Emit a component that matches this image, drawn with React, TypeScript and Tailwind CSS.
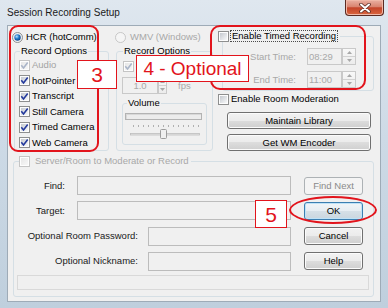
import React, { useId } from 'react';

const RED = '#e2141c';

function useSafeId() {
  return 'g' + useId().replace(/[^a-zA-Z0-9]/g, '');
}

function CheckBox({ checked = false, disabled = false }: { checked?: boolean; disabled?: boolean }) {
  const id = useSafeId();
  return (
    <svg width="11" height="11" viewBox="0 0 11 11" className="shrink-0">
      <defs>
        <linearGradient id={id} x1="0" y1="0" x2="1" y2="1">
          <stop offset="0" stopColor={disabled ? '#e6e6e6' : '#c5c9cf'} />
          <stop offset="1" stopColor={disabled ? '#f7f7f7' : '#f8f9fa'} />
        </linearGradient>
      </defs>
      <rect x="0.5" y="0.5" width="10" height="10" fill="#fdfdfd" stroke={disabled ? '#c4c4c4' : '#8e8f8f'} />
      <rect x="2" y="2" width="7" height="7" fill={`url(#${id})`} />
      {checked && (
        <path d="M2.3 5.3 4.5 7.9 8.7 2.4" fill="none" stroke={disabled ? '#a9b4c8' : '#23399c'} strokeWidth="1.6" />
      )}
    </svg>
  );
}

function Radio({ selected = false, disabled = false }: { selected?: boolean; disabled?: boolean }) {
  const id = useSafeId();
  return (
    <svg width="11" height="11" viewBox="0 0 11 11" className="shrink-0">
      <defs>
        <radialGradient id={id} cx="0.38" cy="0.35" r="0.7">
          <stop offset="0" stopColor="#b9e3ff" />
          <stop offset="0.5" stopColor="#1f7bc9" />
          <stop offset="1" stopColor="#0c3f7f" />
        </radialGradient>
      </defs>
      <circle cx="5.5" cy="5.5" r="5" fill={disabled ? '#f3f3f3' : '#e4e7eb'} stroke={disabled ? '#c6c6c6' : '#8e8f8f'} />
      <circle cx="5.5" cy="5.5" r="3.9" fill={disabled ? '#f5f5f5' : '#f7f7f7'} />
      {selected && <circle cx="5.5" cy="5.5" r="3.2" fill={`url(#${id})`} />}
    </svg>
  );
}

function Arrow({ up = false }: { up?: boolean }) {
  return (
    <svg width="5" height="3" viewBox="0 0 5 3">
      <path d={up ? 'M0 3 2.5 0 5 3Z' : 'M0 0 2.5 3 5 0Z'} fill="#a8a8a8" />
    </svg>
  );
}

function Spinner({ w = 14, h = 17 }: { w?: number; h?: number }) {
  return (
    <div
      className="flex flex-col border border-[#c9c9c9] bg-[linear-gradient(#f8f8f8,#ececec)]"
      style={{ width: w, height: h }}
    >
      <div className="flex flex-1 items-center justify-center border-b border-[#d2d2d2]">
        <Arrow up />
      </div>
      <div className="flex flex-1 items-center justify-center">
        <Arrow />
      </div>
    </div>
  );
}

function Btn({
  children,
  className = '',
  disabled = false,
  primary = false,
}: {
  children: React.ReactNode;
  className?: string;
  disabled?: boolean;
  primary?: boolean;
}) {
  const look = disabled
    ? 'border-[#adb2b5] bg-[#f4f4f4] text-[#8a8a8a]'
    : primary
      ? 'border-[#3c7fb1] bg-[linear-gradient(#f1f5f8,#e6edf2_50%,#d6e0e7_50%,#cad6df)] shadow-[inset_0_0_0_1px_#bfe2f7]'
      : 'border-[#707070] bg-[linear-gradient(#f2f2f2,#ebebeb_50%,#dddddd_50%,#cfcfcf)] shadow-[inset_0_0_0_1px_#fbfbfb]';
  return (
    <div className={`flex shrink-0 items-center justify-center rounded-[3px] border ${look} ${className}`}>
      {children}
    </div>
  );
}

function CloseButton() {
  return (
    <div className="mr-[4px] flex h-[16px] w-[39px] items-center justify-center rounded-b-[4px] border border-t-0 border-[#5b2a22] bg-[linear-gradient(#eab0a2,#d98470_45%,#c4442a_52%,#d9663f)] shadow-[inset_0_0_0_1px_#f0b8a8]">
      <svg width="12" height="10" viewBox="0 0 12 10">
        <path d="M2 1.5 10 8.5M10 1.5 2 8.5" stroke="#5a2d26" strokeWidth="3.6" strokeLinecap="round" />
        <path d="M2 1.5 10 8.5M10 1.5 2 8.5" stroke="#ffffff" strokeWidth="2" strokeLinecap="round" />
      </svg>
    </div>
  );
}

const Field = ({ className = '' }: { className?: string }) => (
  <div className={`shrink-0 border border-[#bcbcbc] bg-[#f0f0f0] ${className}`} />
);

const ROWS: { label: string; checked: boolean; disabled?: boolean }[] = [
  { label: 'Audio', checked: true, disabled: true },
  { label: 'hotPointer', checked: true },
  { label: 'Transcript', checked: true },
  { label: 'Still Camera', checked: true },
  { label: 'Timed Camera', checked: true },
  { label: 'Web Camera', checked: true },
];

const FORM: { label: string; labelW: string; inputCls: string; btn: string; disabled?: boolean; primary?: boolean }[] = [
  { label: 'Find:', labelW: 'w-[48px]', inputCls: 'ml-[12px] w-[214px]', btn: 'Find Next', disabled: true },
  { label: 'Target:', labelW: 'w-[48px]', inputCls: 'ml-[12px] w-[214px]', btn: 'OK', primary: true },
  { label: 'Optional Room Password:', labelW: 'w-[121px]', inputCls: 'ml-[10px] w-[143px]', btn: 'Cancel' },
  { label: 'Optional Nickname:', labelW: 'w-[121px]', inputCls: 'ml-[10px] w-[143px]', btn: 'Help' },
];

export default function App() {
  return (
    <div className="relative h-[308px] w-[388px] overflow-hidden bg-[linear-gradient(180deg,#dfe7ef_0%,#cddae6_45%,#bfcfdd_100%)] font-['Liberation_Sans',Arial,sans-serif] text-[9.5px] leading-[12px] text-black">
      {/* Title bar */}
      <div className="flex h-[25px] items-start justify-between">
        <div className="pl-[7px] pt-[6px] text-[10px] leading-[13px] text-[#1a1a1a]">Session Recording Setup</div>
        <CloseButton />
      </div>

      {/* Client area */}
      <div className="ml-[7px] h-[277px] w-[374px] border border-[#9eabb7] bg-[#f0f0f0]">
        <div className="flex h-[125px]">
          {/* HCR column */}
          <div className="flex w-[101px] shrink-0 flex-col pl-[4px]">
            <div className="mt-[5px] flex h-[12px] items-center gap-[3px]">
              <Radio selected />
              <span>HCR (hotComm)</span>
            </div>
            <fieldset className="ml-[2px] mt-[2px] h-[106px] w-[95px] rounded-[3px] border border-[#d5dfe5] pl-[4px]">
              <legend className="ml-[1px] px-[1px]">Record Options</legend>
              <div className="pt-[0.5px]">
                {ROWS.map((r) => (
                  <div key={r.label} className="flex h-[15.5px] items-center gap-[2px]">
                    <CheckBox checked={r.checked} disabled={r.disabled} />
                    <span className={r.disabled ? 'text-[#a3a3a3]' : ''}>{r.label}</span>
                  </div>
                ))}
              </div>
            </fieldset>
          </div>

          {/* WMV column */}
          <div className="ml-[6px] flex w-[98px] shrink-0 flex-col">
            <div className="mt-[5px] flex h-[12px] items-center gap-[4px]">
              <Radio disabled />
              <span className="text-[#a8a8a8]">WMV (Windows)</span>
            </div>
            <fieldset className="ml-[1px] mt-[2px] h-[106px] w-[97px] rounded-[3px] border border-[#d5dfe5] pl-[6px]">
              <legend className="px-[1px]">Record Options</legend>
              <div className="mt-[4px]">
                <CheckBox checked disabled />
              </div>
              <div className="ml-[-1px] mt-[5px] flex items-center">
                <div className="flex h-[17px] w-[36px] items-center justify-center border border-[#c9c9c9] bg-[#f0f0f0] text-[#a8a8a8]">
                  1.0
                </div>
                <Spinner w={9} h={17} />
                <span className="ml-[11px] text-[#a8a8a8]">fps</span>
              </div>
              <fieldset className="ml-[-1px] mt-[3px] h-[48px] w-[85px] rounded-[3px] border border-[#d5dfe5] pl-[2px]">
                <legend className="ml-[2px] px-[1px]">Volume</legend>
                <div className="mt-[4px] h-[7px] w-[77px] border border-[#b3b3b3] bg-[#ececec] shadow-[inset_1px_1px_0_#d8d8d8]" />
                <svg width="77" height="2" viewBox="0 0 77 2" className="mt-[5px] block">
                  {Array.from({ length: 14 }).map((_, i) => (
                    <rect key={i} x={8 + i * 5} y="0" width="1" height="2" fill="#b0b0b0" />
                  ))}
                </svg>
                <svg width="77" height="10" viewBox="0 0 77 10" className="mt-[2px] block">
                  <rect x="5.5" y="4.5" width="69" height="1.5" fill="#e6e6e6" stroke="#bdbdbd" strokeWidth="0.8" />
                  <rect x="35.5" y="0.5" width="6" height="9" rx="1" fill="#efefef" stroke="#9c9c9c" />
                </svg>
              </fieldset>
            </fieldset>
          </div>

          {/* Right column */}
          <div className="ml-[4px] flex w-[157px] shrink-0 flex-col">
            <fieldset className="ml-[5px] mt-[4px] h-[61px] w-[152px] rounded-[3px] border border-[#d5dfe5] pl-0">
              <legend className="ml-[-5px] flex items-center gap-[1px] pr-[2px]">
                <CheckBox />
                <span className="border border-dotted border-[#4a4a4a] px-[1px] leading-[10px]">Enable Timed Recording</span>
              </legend>
              <div className="mt-[6px] flex flex-col gap-[6px]">
                {[
                  ['Start Time:', '08:29'],
                  ['End Time:', '11:00'],
                ].map(([l, v]) => (
                  <div key={l} className="flex h-[17px] items-center">
                    <span className="w-[73px] text-right text-[#a8a8a8]">{l}</span>
                    <div className="ml-[11px] flex h-[17px] w-[35px] items-center border border-[#c9c9c9] bg-[#f0f0f0] pl-[1px] text-[#a8a8a8]">
                      {v}
                    </div>
                    <Spinner />
                  </div>
                ))}
              </div>
            </fieldset>
            <div className="ml-[1px] mt-[2px] flex h-[12px] items-center gap-[2px]">
              <CheckBox />
              <span>Enable Room Moderation</span>
            </div>
            <Btn className="ml-[10px] mt-[7px] h-[17px] w-[144px]">Maintain Library</Btn>
            <Btn className="ml-[10px] mt-[5px] h-[17px] w-[144px]">Get WM Encoder</Btn>
          </div>
        </div>

        {/* Server / room group */}
        <fieldset className="ml-[5px] mt-[4px] h-[142px] w-[361px] rounded-[3px] border border-[#d5dfe5] pl-[3px]">
          <legend className="ml-[2px] flex items-center gap-[5px] pr-[2px]">
            <CheckBox disabled />
            <span className="text-[#a8a8a8]">Server/Room to Moderate or Record</span>
          </legend>
          <div className="mt-[9px] flex flex-col gap-[6.3px]">
            {FORM.map((f) => (
              <div key={f.label} className="flex h-[19px] items-center">
                <span className={`${f.labelW} shrink-0 text-right text-[#1a1a1a]`}>{f.label}</span>
                <Field className={`h-[19px] ${f.inputCls}`} />
                <Btn className="ml-[13px] h-[18px] w-[59px]" disabled={f.disabled} primary={f.primary}>
                  {f.btn}
                </Btn>
              </div>
            ))}
          </div>
          <div className="mt-[4px] h-[15px] w-[352px] border border-[#d9d9d9]" />
        </fieldset>
      </div>

      {/* Annotations */}
      <div className="absolute left-[9px] top-[25px] h-[127px] w-[90px] rounded-[9px] border-2 border-[#e2141c]" />
      <div className="absolute left-[210px] top-[25px] h-[65px] w-[156px] rounded-[10px] border-2 border-[#e2141c]" />
      <div
        className="absolute left-[77px] top-[60px] flex h-[29px] w-[40px] items-center justify-center border-[1.5px] border-[#e2141c] bg-white text-[21px] leading-none"
        style={{ color: RED }}
      >
        3
      </div>
      <div
        className="absolute left-[136px] top-[55px] flex h-[27px] w-[113px] items-center justify-center border-[1.5px] border-[#e2141c] bg-white text-[19px] leading-none"
        style={{ color: RED }}
      >
        4 - Optional
      </div>
      <div
        className="absolute left-[255px] top-[200px] flex h-[28px] w-[32px] items-center justify-center border-[1.5px] border-[#e2141c] bg-white text-[21px] leading-none"
        style={{ color: RED }}
      >
        5
      </div>
      <div className="absolute left-[289px] top-[196px] h-[28px] w-[88px] rounded-[50%] border-2 border-[#e2141c]" />
    </div>
  );
}
